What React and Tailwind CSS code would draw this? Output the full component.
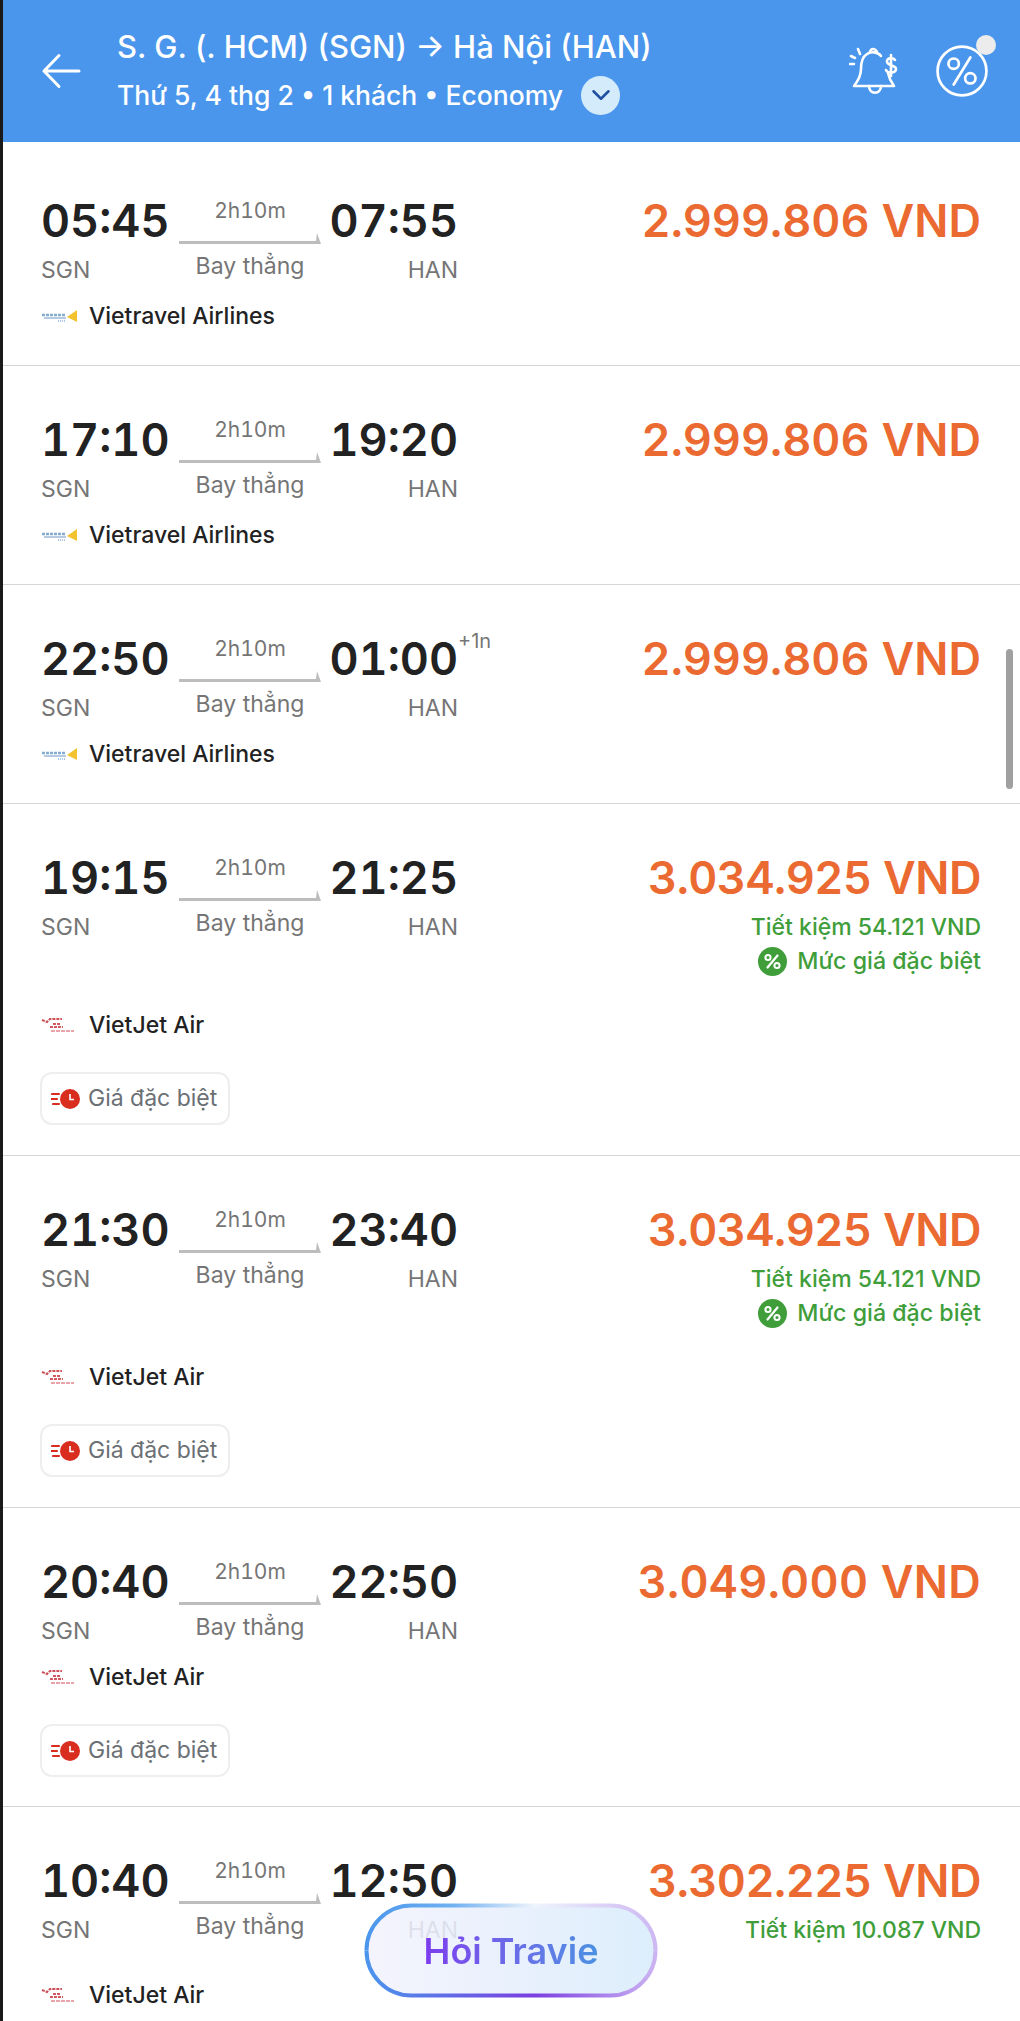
import React from 'react';
import { ChevronDown } from 'lucide-react';

const flights = [
  { dep: '05:45', arr: '07:55', price: '2.999.806 VND', airline: 'vietravel', first: true },
  { dep: '17:10', arr: '19:20', price: '2.999.806 VND', airline: 'vietravel' },
  { dep: '22:50', arr: '01:00', price: '2.999.806 VND', airline: 'vietravel', nextDay: true },
  { dep: '19:15', arr: '21:25', price: '3.034.925 VND', priceFit: 'tracking-[-0.5px]', airline: 'vietjet', saving: '54.121', special: true, tag: true },
  { dep: '21:30', arr: '23:40', price: '3.034.925 VND', priceFit: 'tracking-[-0.5px]', airline: 'vietjet', saving: '54.121', special: true, tag: true },
  { dep: '20:40', arr: '22:50', price: '3.049.000 VND', priceFit: 'tracking-[0.3px]', airline: 'vietjet', tag: true },
  { dep: '10:40', arr: '12:50', price: '3.302.225 VND', priceFit: 'tracking-[-0.5px]', airline: 'vietjet', saving: '10.087' },
];

const BackArrow = () => (
  <svg width="40" height="36" viewBox="0 0 40 36" fill="none" stroke="white" strokeWidth="3" strokeLinecap="round" strokeLinejoin="round" className="shrink-0">
    <path d="M38 18 H3 M18 2.500 L3 18 L18 33.500" />
  </svg>
);

const BellIcon = () => (
  <svg width="54" height="56" viewBox="0 0 52 56" fill="none" stroke="white" strokeWidth="2.6" strokeLinecap="round" strokeLinejoin="round">
    <path d="M31 13 C28 9 21 8 17 11 C12 14 11 20 11 26 C11 33 8 38 4 43 H44 C41 39 39 35 38 30" />
    <path d="M20 9 C21 5 25 5 27 9" />
    <path d="M19 43 C19 52 31 52 31 43" />
    <path d="M8 6 L10 11 M1 13 L5 15 M0 21 L4 21" />
    <path d="M45 17 C43 14 36 15 37 19 C38 23 46 22 46 26 C46 30 38 31 36 27 M41 12 V33" />
  </svg>
);

const PercentBadge = () => (
  <div className="relative w-[52px] h-[52px]">
    <svg width="52" height="52" viewBox="0 0 50 50" fill="none" stroke="white" strokeWidth="2.6" strokeLinecap="round">
      <circle cx="25" cy="25" r="23.5" />
      <circle cx="17" cy="18" r="5" />
      <circle cx="33" cy="32" r="5" />
      <path d="M33 12 L17 38" />
    </svg>
    <div className="absolute -top-[10px] -right-[8px] w-[20px] h-[20px] rounded-full bg-[#ececec]" />
  </div>
);

const VietravelLogo = () => (
  <svg width="37" height="14" viewBox="0 0 37 14" className="shrink-0">
    <path d="M1 6 H24" stroke="#5b8fc4" strokeWidth="2.4" strokeDasharray="3 1" opacity="0.75" />
    <path d="M3 9 H25" stroke="#2f6aa8" strokeWidth="1" opacity="0.7" />
    <path d="M17 12 H24" stroke="#3f7fbd" strokeWidth="1.4" strokeDasharray="1 1" opacity="0.6" />
    <path d="M36 1 V13 L26 8 Z" fill="#f2c32f" />
  </svg>
);

const VietjetLogo = () => (
  <svg width="33" height="16" viewBox="0 0 33 16" className="shrink-0">
    <path d="M1 3 L6 5 L9 2 H21" stroke="#c5303a" strokeWidth="2" fill="none" strokeDasharray="3 1" opacity="0.85" />
    <path d="M12 7 H20 M9 10 H22" stroke="#c5303a" strokeWidth="1.8" strokeDasharray="3 1" opacity="0.8" />
    <path d="M10 14 H33" stroke="#d4545c" strokeWidth="1.6" strokeDasharray="4 1" opacity="0.7" />
  </svg>
);

const FastClock = () => (
  <svg width="29" height="20" viewBox="0 0 29 20" className="shrink-0">
    <circle cx="19" cy="10" r="10" fill="#d92d20" />
    <path d="M19 5 V10.5 H23" stroke="white" strokeWidth="1.6" fill="none" />
    <path d="M1 5 H8 M0 10 H6 M2 15 H8" stroke="#d92d20" strokeWidth="2.2" strokeLinecap="round" />
  </svg>
);

const PercentDot = () => (
  <svg width="29" height="29" viewBox="0 0 29 29" className="shrink-0">
    <circle cx="14.5" cy="14.5" r="14.5" fill="#3f9e3a" />
    <circle cx="10" cy="10.5" r="2.6" stroke="white" strokeWidth="2" fill="none" />
    <circle cx="19" cy="18.5" r="2.6" stroke="white" strokeWidth="2" fill="none" />
    <path d="M19.5 8.5 L9.5 20.5" stroke="white" strokeWidth="2.2" strokeLinecap="round" />
  </svg>
);

const RouteLine = () => (
  <svg width="142" height="14" viewBox="0 0 142 14" className="block">
    <path d="M0 13 H142 L138 2 L137 10 H0 Z" fill="#bdbdbd" />
  </svg>
);

const FlightRow = ({ f }) => (
  <div className={`border-b border-[#d6d6d6] pl-[38px] pr-[39px] ${f.first ? 'pt-[52px]' : 'pt-[47px]'} ${f.special ? 'pb-[30px]' : f.tag ? 'pb-[29px]' : 'pb-[36px]'}`}>
    <div className="flex items-start justify-between">
      <div className="flex items-start">
        <div className="w-[138px]">
          <div className="h-[54px] leading-[54px] text-[45px] font-semibold tabular-nums text-[#222]">{f.dep}</div>
          <div className="mt-[9px] h-[27px] leading-[27px] text-[23px] text-[#757575]">SGN</div>
        </div>
        <div className="w-[142px] text-[#757575]">
          <div className="mt-[5px] h-[24px] leading-[24px] text-[21px] tabular-nums text-center mb-[8px]">2h10m</div>
          <RouteLine />
          <div className="mt-[5px] h-[32px] leading-[32px] text-[23px] text-center">Bay thẳng</div>
        </div>
        <div className="w-[137px] text-right relative">
          <div className="h-[54px] leading-[54px] text-[45px] font-semibold tabular-nums text-[#222]">{f.arr}</div>
          <div className="mt-[9px] h-[27px] leading-[27px] text-[23px] text-[#757575]">HAN</div>
          {f.nextDay && (
            <span className="absolute left-[137px] top-[-6px] text-[20px] text-[#757575]">+1n</span>
          )}
        </div>
      </div>
      <div className={`flex flex-col items-end ${f.special ? 'pb-[15px]' : f.saving ? 'pb-[19px]' : ''}`}>
        <div className={`h-[54px] leading-[54px] text-[45px] font-semibold tabular-nums text-[#eb6a32] ${f.priceFit || ''}`}>{f.price}</div>
        {f.saving && (
          <div className="mt-[8px] h-[28px] leading-[28px] text-[23px] font-medium text-[#3f9e3a]">Tiết kiệm {f.saving} VND</div>
        )}
        {f.special && (
          <div className="mt-[3px] h-[34px] flex items-center gap-[10px] text-[23.2px] font-medium text-[#3f9e3a]">
            <PercentDot />
            Mức giá đặc biệt
          </div>
        )}
      </div>
    </div>
    <div className="mt-[19px] h-[26px] flex items-center gap-[11px]">
      <div className="w-[37px] flex items-center">
        {f.airline === 'vietravel' ? <VietravelLogo /> : <VietjetLogo />}
      </div>
      <span className="text-[23px] font-medium text-[#222]">
        {f.airline === 'vietravel' ? 'Vietravel Airlines' : 'VietJet Air'}
      </span>
    </div>
    {f.tag && (
      <div className="mt-[34px] -ml-[1px] w-[190px] h-[53px] border-2 border-[#eeeeee] rounded-[12px] flex items-center pl-[9px] gap-[8px]">
        <FastClock />
        <span className="text-[23px] text-[#6b7075]">Giá đặc biệt</span>
      </div>
    )}
  </div>
);

const AskButton = () => (
  <div className="absolute left-[361px] top-[1903px] w-[294px] h-[95px]">
    <div className="absolute inset-[2px] rounded-full bg-gradient-to-r from-[#f3f2fd]/85 to-[#d9ecfb]/90" />
    <svg width="294" height="95" viewBox="0 0 294 95" fill="none" className="absolute inset-0">
      <defs>
        <linearGradient id="ringTop" x1="0" y1="0" x2="294" y2="0" gradientUnits="userSpaceOnUse">
          <stop offset="0" stopColor="#4a96ec" />
          <stop offset="0.3" stopColor="#6fb0f0" />
          <stop offset="0.58" stopColor="#eef4fc" />
          <stop offset="1" stopColor="#cdb6f2" />
        </linearGradient>
        <linearGradient id="ringBottom" x1="0" y1="0" x2="294" y2="0" gradientUnits="userSpaceOnUse">
          <stop offset="0" stopColor="#4a96ec" />
          <stop offset="0.58" stopColor="#7b3fe0" />
          <stop offset="1" stopColor="#cdb6f2" />
        </linearGradient>
      </defs>
      <path d="M2.5 47.5 A45 45 0 0 1 47.5 2.5 H246.5 A45 45 0 0 1 291.500 47.500" stroke="url(#ringTop)" strokeWidth="4" />
      <path d="M2.5 47.5 A45 45 0 0 0 47.5 92.5 H246.5 A45 45 0 0 0 291.500 47.500" stroke="url(#ringBottom)" strokeWidth="4" />
    </svg>
    <div className="absolute inset-0 flex items-center justify-center">
      <span className="text-[36px] font-semibold bg-gradient-to-r from-[#7c3aed] to-[#4a90e2] bg-clip-text text-transparent">Hỏi Travie</span>
    </div>
  </div>
);

export default function App() {
  return (
    <div className="relative h-[2021px] w-[1020px] overflow-hidden bg-white border-l-[3px] border-[#1a1a1a] font-['Inter',sans-serif]">
      <header className="h-[142px] bg-[#4a96ec] flex items-center pl-[38px] pr-[32px] text-white">
        <BackArrow />
        <div className="ml-[36px] flex-1">
          <div className="text-[31px] font-medium leading-[40px]">S. G. (. HCM) (SGN) → Hà Nội (HAN)</div>
          <div className="mt-[8px] flex items-center gap-[18px]">
            <span className="text-[26.5px] font-medium leading-[40px]">Thứ 5, 4 thg 2 • 1 khách • Economy</span>
            <div className="w-[39px] h-[39px] rounded-full bg-[#d4ebfb] flex items-center justify-center">
              <ChevronDown size={30} strokeWidth={2} className="text-[#1f4fa0]" />
            </div>
          </div>
        </div>
        <div className="flex items-center gap-[33px]">
          <BellIcon />
          <PercentBadge />
        </div>
      </header>
      {flights.map((f, i) => (
        <FlightRow key={i} f={f} />
      ))}
      <div className="absolute left-[1003px] top-[649px] w-[7px] h-[140px] rounded-full bg-[#a0a0a0]" />
      <AskButton />
    </div>
  );
}
